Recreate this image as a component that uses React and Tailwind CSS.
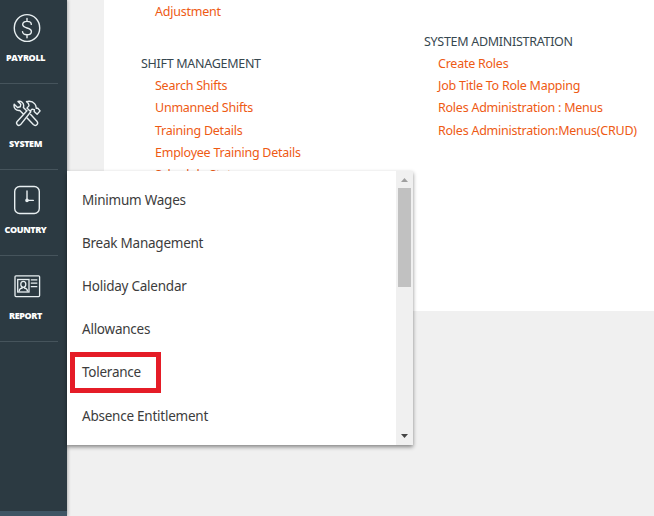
const navItems = [
  { label: "PAYROLL", icon: PayrollIcon },
  { label: "SYSTEM", icon: ToolsIcon },
  { label: "COUNTRY", icon: ClockIcon },
  { label: "REPORT", icon: ReportIcon },
];

const menuItems = [
  "Minimum Wages",
  "Break Management",
  "Holiday Calendar",
  "Allowances",
  "Tolerance",
  "Absence Entitlement",
];

function PayrollIcon() {
  return (
    <svg width="28" height="30" viewBox="0 0 28 30" fill="none" stroke="#e8eff1" strokeWidth="1.4" strokeLinecap="round">
      <ellipse cx="14" cy="15" rx="12.7" ry="13.4" />
      <path d="M14 5.400v3M14 21.800v3M18.300 11.400c0-1.800-1.800-3-4.300-3s-4.300 1.200-4.300 3.200c0 4.400 8.700 2.400 8.700 6.900 0 2-1.900 3.300-4.400 3.300s-4.500-1.300-4.500-3.200" />
    </svg>
  );
}

function ToolsIcon() {
  return (
    <svg width="28" height="30" viewBox="0 0 28 30" fill="none" stroke="#e8eff1" strokeWidth="1.4" strokeLinejoin="round" strokeLinecap="round">
      <path d="M5 2.500c3-.9 5.900 1.400 5.700 4.600l-.3 1.300 3.200 3.400M1.200 5.300c-.9 3.600 2 6.700 5.600 6.100l3.500 3.700M1.200 5.300l3.300 3.200 2.800-.7.500-2.600L5 2.500M17.700 15.600l6.200 6.600c2.100 2.500-1.200 5.700-3.600 3.400l-6.200-6.700" />
      <path d="M13.500 2.600c3.300-.7 6.500.1 8.300 2.300 1.300 1.500 1.300 2.900 1.500 4.400l1.500-.1 2.300 2.700-3 3.300-2.900-2.800.2-1.700-2.400-.6-1.500 1.700M13.500 2.600c1.700 1.100 2.700 2.300 2.400 4.300l-2 2.200 3.900 3.600L7.600 25.600c-2.200 2.200-5.300-.8-3.400-3.100l9.700-10.800" />
    </svg>
  );
}

function ClockIcon() {
  return (
    <svg width="28" height="30" viewBox="0 0 28 30" fill="none" stroke="#e8eff1" strokeWidth="1.4">
      <rect x="1.700" y="1.500" width="24.600" height="27" rx="5" />
      <path d="M14 6v9.400h6.300" strokeLinecap="round" />
      <circle cx="14" cy="15.400" r="1.100" fill="#e8eff1" />
    </svg>
  );
}

function ReportIcon() {
  return (
    <svg width="28" height="30" viewBox="0 0 28 30" fill="none" stroke="#e8eff1" strokeWidth="1.300">
      <rect x="2" y="4.800" width="24.600" height="20.800" rx="1" />
      <rect x="4.700" y="8.500" width="11.300" height="12.500" />
      <ellipse cx="10.300" cy="13.300" rx="2.500" ry="3" />
      <path d="M6.100 20.500c.1-2.600 1.600-3.300 3-3.400v-1.300M11.500 15.800v1.300c1.400.1 2.900.8 3 3.400M17.800 8.800h6.500M17.800 12.200h6.500M17.800 15.600h6.500" />
    </svg>
  );
}

function Section({ title, links }) {
  return (
    <section>
      <h2 className="h-[22px] text-[12.5px] leading-[22px] tracking-[-0.29px] text-[#37474f]">{title}</h2>
      <ul className="pl-3.5">
        {links.map((link) => (
          <li key={link} className="h-[22.3px] text-[12.5px] leading-[22px] tracking-[-0.24px] text-[#ee5a14]">{link}</li>
        ))}
      </ul>
    </section>
  );
}

export default function App() {
  return (
    <div className="relative flex h-[516px] w-[654px] overflow-hidden whitespace-nowrap bg-[#f0f0f0] font-['Noto_Sans','Open_Sans',sans-serif]">
      <aside className="flex w-[67px] shrink-0 flex-col bg-[#2c3a42] shadow-[1px_0_3px_rgba(0,0,0,0.25)]">
        <nav className="-mt-[2px]">
          {navItems.map(({ label, icon: Icon }) => (
            <div key={label} className="flex h-[86px] w-[58px] flex-col border-b border-[#46545c] pt-[15px]">
              <div className="ml-[13px] h-[30px]"><Icon /></div>
              <span className="mt-[8px] w-[51px] text-center font-['Open_Sans'] text-[9px] leading-[14px] font-extrabold tracking-[-0.4px] text-white">{label}</span>
            </div>
          ))}
        </nav>
        <div className="mt-auto h-[5px] bg-[#3f5665]" />
      </aside>

      <main className="ml-[37px] flex h-[311px] w-[550px] shrink-0 bg-white pl-[37px]">
        <div className="w-[283px]">
          <p className="h-[53px] pl-3.5 text-[12.5px] leading-[23px] tracking-[-0.24px] text-[#ee5a14]">Adjustment</p>
          <Section
            title="SHIFT MANAGEMENT"
            links={["Search Shifts", "Unmanned Shifts", "Training Details", "Employee Training Details", "Schedule Status"]}
          />
        </div>
        <div className="pt-[30.8px]">
          <Section
            title="SYSTEM ADMINISTRATION"
            links={["Create Roles", "Job Title To Role Mapping", "Roles Administration : Menus", "Roles Administration:Menus(CRUD)"]}
          />
        </div>
      </main>

      <div className="absolute top-[171px] left-[67px] flex h-[274px] w-[346px] bg-white shadow-[0_2px_4px_rgba(0,0,0,0.45)]">
        <ul className="flex-1 pt-2">
          {menuItems.map((item) => (
            <li key={item} className="relative h-[43px] pl-[15px] text-[13.5px] leading-[43px] tracking-[-0.24px] text-[#3c3c3c] last:pt-px">
              {item}
              {item === "Tolerance" && (
                <span className="absolute top-px left-[3px] h-[41px] w-[91px] border-[5px] border-[#e51c27]" />
              )}
            </li>
          ))}
        </ul>
        <div className="flex w-[17px] flex-col items-center bg-[#f0f0f0]">
          <svg width="17" height="17" viewBox="0 0 17 17" fill="#a0a0a0"><path d="M5 11h7L8.500 7z" /></svg>
          <div className="h-[99px] w-[13px] bg-[#c1c1c1]" />
          <svg className="mt-auto" width="17" height="17" viewBox="0 0 17 17" fill="#454545"><path d="M5 6h7L8.500 10z" /></svg>
        </div>
      </div>
    </div>
  );
}
